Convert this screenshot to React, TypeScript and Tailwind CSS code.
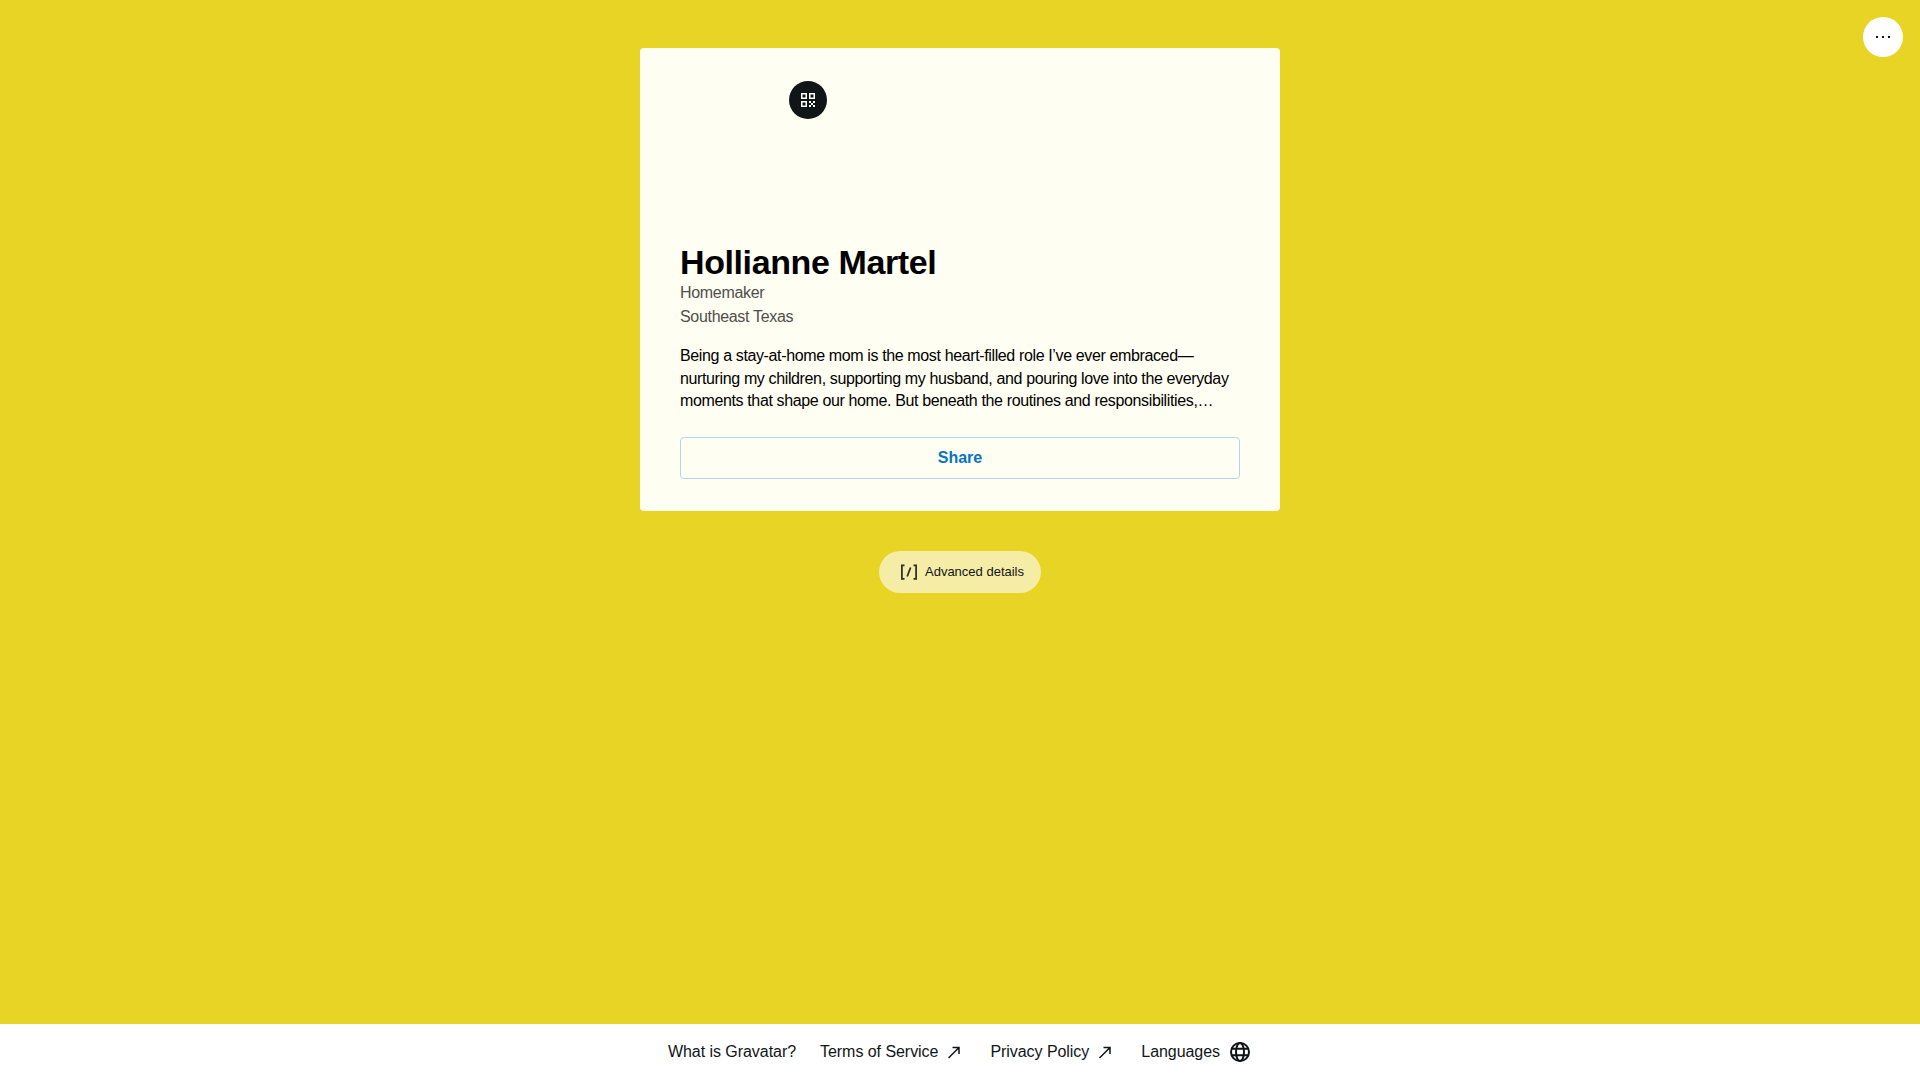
const FONT = "font-['Liberation_Sans',Arial,sans-serif]";

function ArrowUpRight() {
  return (
    <svg width="24" height="24" viewBox="0 0 24 24" fill="none" stroke="currentColor" strokeWidth="1.5" aria-hidden="true">
      <path d="M10.5 7.5H17V14M17 7.5 6.5 18" />
    </svg>
  );
}

function QrIcon() {
  return (
    <svg width="14" height="14" viewBox="0 0 14 14" fill="#fff" aria-hidden="true">
      <path
        fillRule="evenodd"
        d="M0 0h6v6H0zm1.5 1.5v3h3v-3zM8 0h6v6H8zm1.5 1.5v3h3v-3zM0 8h6v6H0zm1.5 1.5v3h3v-3z"
      />
      <path d="M8 8h2v2H8zM12 8h2v2h-2zM10 10h2v2h-2zM8 12h2v2H8zM12 12h2v2h-2z" />
    </svg>
  );
}

function CodeIcon() {
  return (
    <svg width="16" height="16" viewBox="0 0 16 16" fill="none" stroke="#2a2e30" strokeWidth="1.75" aria-hidden="true">
      <path d="M3.5 1.25H.9v13.5h2.6M12.5 1.25h2.6v13.5h-2.6M6.2 12.5l3.4-9" />
    </svg>
  );
}

function GlobeIcon() {
  return (
    <svg width="24" height="24" viewBox="0 0 24 24" fill="none" stroke="currentColor" strokeWidth="2" aria-hidden="true">
      <circle cx="12" cy="12" r="9" />
      <ellipse cx="12" cy="12" rx="4" ry="9" />
      <path d="M3.5 8.75h17M3.5 15.25h17" />
    </svg>
  );
}

export default function App() {
  return (
    <div className={`${FONT} min-h-screen flex flex-col bg-[#e8d424] text-[#101517]`}>
      <div className="relative flex-1 flex flex-col items-center pt-12">
        {/* menu */}
        <button className="absolute top-[17px] right-[17px] w-10 h-10 rounded-full bg-white flex items-center justify-center gap-1">
          <span className="w-0.5 h-0.5 bg-[#101517]" />
          <span className="w-0.5 h-0.5 bg-[#101517]" />
          <span className="w-0.5 h-0.5 bg-[#101517]" />
        </button>

        <section className="w-[640px] rounded bg-[#fffef2] px-10 pb-8">
          <div className="relative h-[196px]">
            <button className="absolute left-[109px] top-[33px] w-[38px] h-[38px] rounded-full bg-[#101517] flex items-center justify-center">
              <QrIcon />
            </button>
          </div>
          <h1 className="text-[34px] leading-[37px] font-bold tracking-[-0.4px] text-black">Hollianne Martel</h1>
          <p className="text-base leading-6 tracking-[-0.32px] text-[#4f4f4b]">Homemaker</p>
          <p className="text-base leading-6 tracking-[-0.32px] text-[#4f4f4b]">Southeast Texas</p>
          <p className="mt-[16.4px] text-base leading-[22.4px] tracking-[-0.37px] text-black">
            Being a stay-at-home mom is the most heart-filled role I’ve ever embraced—nurturing my children, supporting
            my husband, and pouring love into the everyday moments that shape our home. But beneath the routines and
            responsibilities,…
          </p>
          <button className="mt-[24.6px] w-full h-[42px] rounded-sm border border-[#b3d6e8] text-base font-bold text-[#0675c4]">
            Share
          </button>
        </section>

        <button className="mt-10 h-[42px] pl-[22px] pr-[17px] rounded-full bg-[#f5eca6] flex items-center gap-2 text-[13px]">
          <CodeIcon />
          Advanced details
        </button>
      </div>

      <footer className="h-14 bg-white flex items-center justify-center gap-6 text-base tracking-[-0.05px]">
        <a>What is Gravatar?</a>
        <a className="flex items-center gap-1">
          Terms of Service <ArrowUpRight />
        </a>
        <a className="flex items-center gap-1">
          Privacy Policy <ArrowUpRight />
        </a>
        <a className="flex items-center gap-2">
          Languages <GlobeIcon />
        </a>
      </footer>
    </div>
  );
}
